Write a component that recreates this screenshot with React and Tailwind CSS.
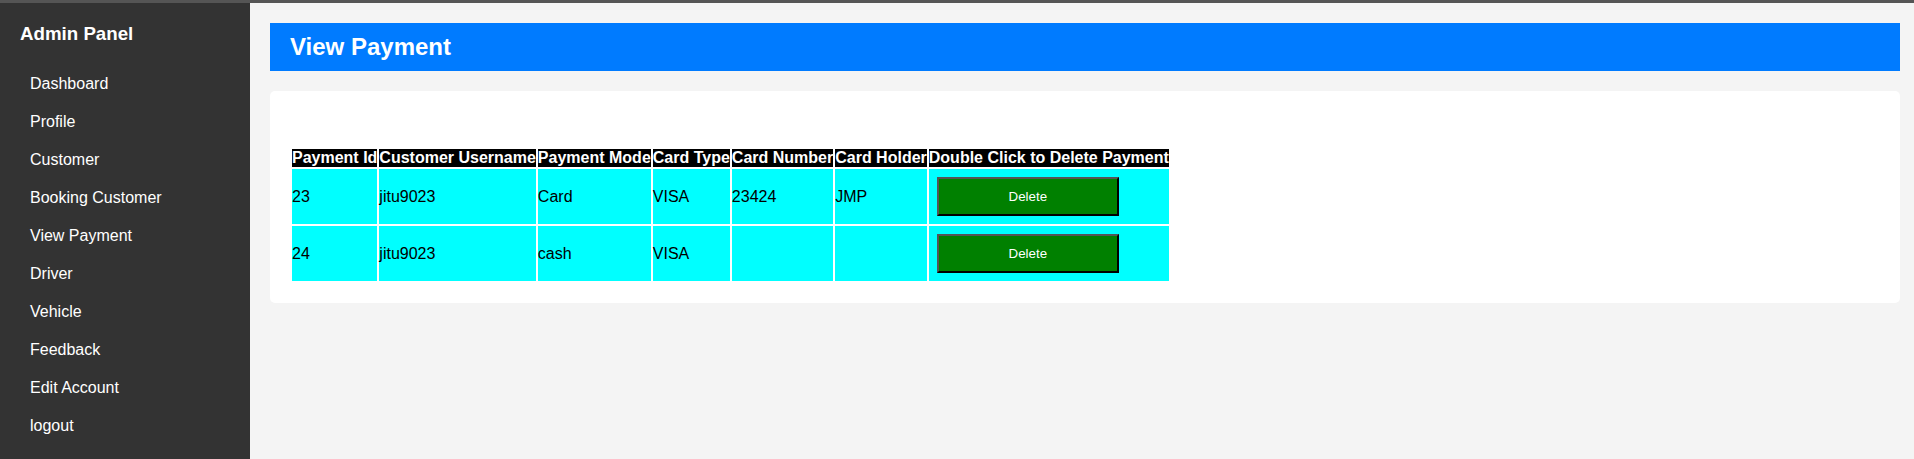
const navItems = [
  "Dashboard",
  "Profile",
  "Customer",
  "Booking Customer",
  "View Payment",
  "Driver",
  "Vehicle",
  "Feedback",
  "Edit Account",
  "logout",
];

const columns = [
  "Payment Id",
  "Customer Username",
  "Payment Mode",
  "Card Type",
  "Card Number",
  "Card Holder",
  "Double Click to Delete Payment",
];

const payments = [
  { id: "23", user: "jitu9023", mode: "Card", type: "VISA", number: "23424", holder: "JMP" },
  { id: "24", user: "jitu9023", mode: "cash", type: "VISA", number: "", holder: "" },
];

const Sidebar = () => (
  <aside className="w-[250px] shrink-0 bg-[#333333] pt-[20px] px-[20px] h-[456px]">
    <h3 className="text-[18.72px] leading-[22px] font-bold text-white">Admin Panel</h3>
    <ul className="mt-[20px]">
      {navItems.map((item) => (
        <li key={item} className="h-[38px] flex items-center pl-[10px] text-[16px] text-white">
          {item}
        </li>
      ))}
    </ul>
  </aside>
);

export default function App() {
  return (
    <div className="font-['Liberation_Sans',Arial,sans-serif] w-[1914px] h-[459px] overflow-hidden">
      <div className="h-[3px] bg-[#555555]" />
      <div className="flex">
        <Sidebar />
        <main className="flex-1 bg-[#f4f4f4] pt-[20px] pl-[20px] pr-[14px] h-[456px]">
          <div className="h-[48px] bg-[#007bff] px-[20px] flex items-center">
            <h2 className="text-[24px] font-bold text-white">View Payment</h2>
          </div>
          <div className="mt-[20px] bg-white rounded-[5px] p-[20px]">
            <div className="h-[36px]" />
            <table className="border-separate border-spacing-[2px] text-[16px]">
              <thead>
                <tr>
                  {columns.map((c) => (
                    <th key={c} className="bg-black text-white font-bold h-[18px] leading-[18px] p-0 whitespace-nowrap">
                      {c}
                    </th>
                  ))}
                </tr>
              </thead>
              <tbody>
                {payments.map((p) => (
                  <tr key={p.id} className="bg-[#00ffff] text-black">
                    <td className="p-0 h-[55px] text-left">{p.id}</td>
                    <td className="p-0 text-left">{p.user}</td>
                    <td className="p-0 text-left">{p.mode}</td>
                    <td className="p-0 text-left">{p.type}</td>
                    <td className="p-0 text-left">{p.number}</td>
                    <td className="p-0 text-left">{p.holder}</td>
                    <td className="p-0 text-left">
                      <button
                        onDoubleClick={() => {}}
                        className="ml-[8px] my-[8px] block w-[182px] h-[39px] bg-[#008000] text-white text-[13.33px] border-2 border-t-[#555555] border-l-[#555555] border-b-black border-r-black"
                      >
                        Delete
                      </button>
                    </td>
                  </tr>
                ))}
              </tbody>
            </table>
          </div>
        </main>
      </div>
    </div>
  );
}
